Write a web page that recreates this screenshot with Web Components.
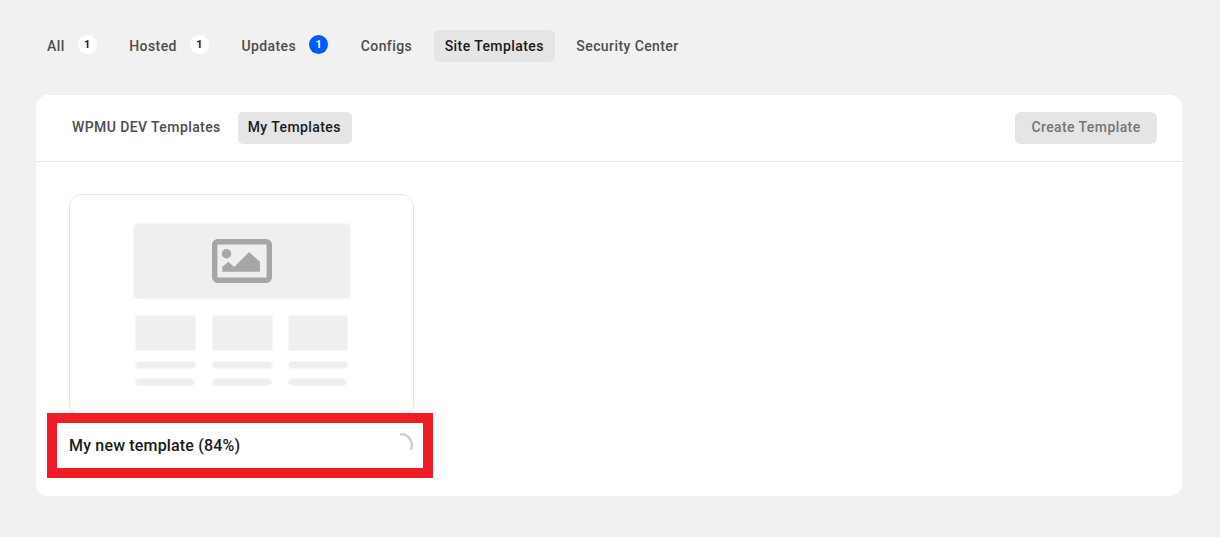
<!DOCTYPE html>
<html>
<head>
<meta charset="utf-8">
<style>
  html, body { margin: 0; height: 100%; }
  body { background: #f1f1f1; font-family: Roboto, "Liberation Sans", sans-serif; padding: 30px 38px 41px 36px; box-sizing: border-box; }
</style>
</head>
<body>
<site-tabs>
  <tab-item>All<count-badge>1</count-badge></tab-item>
  <tab-item>Hosted<count-badge>1</count-badge></tab-item>
  <tab-item>Updates<count-badge blue>1</count-badge></tab-item>
  <tab-item>Configs</tab-item>
  <tab-item active>Site Templates</tab-item>
  <tab-item>Security Center</tab-item>
</site-tabs>
<templates-panel>
  <tab-item slot="tabs">WPMU DEV Templates</tab-item>
  <tab-item slot="tabs" active>My Templates</tab-item>
  <template-card name="My new template (84%)" highlighted></template-card>
</templates-panel>

<script>
class CountBadge extends HTMLElement {
  constructor() {
    super();
    this.attachShadow({mode: 'open'}).innerHTML = `
      <style>
        :host { display: inline-flex; align-items: center; justify-content: center; width: 19px; height: 19px;
          margin: -3px 0 0 13px; border-radius: 50%; background: #fff; color: #1a1a1a; font-size: 11px; font-weight: 700; letter-spacing: 0; }
        :host([blue]) { background: #0059ff; color: #fff; }
      </style>
      <slot></slot>`;
  }
}
customElements.define('count-badge', CountBadge);

class TabItem extends HTMLElement {
  constructor() {
    super();
    this.attachShadow({mode: 'open'}).innerHTML = `
      <style>
        :host { display: inline-flex; align-items: center; height: 32px; box-sizing: border-box; padding: 0 11px; border-radius: 5px;
          font-size: 14px; font-weight: 500; letter-spacing: .41px; color: #4d4d4d; white-space: nowrap; }
        :host([slot="tabs"]) { padding-bottom: 2px; }
        :host([slot="tabs"][active]) { padding-left: 10px; }
        :host([active]) { background: #e5e5e5; color: #1a1a1a; }
      </style>
      <slot></slot>`;
  }
}
customElements.define('tab-item', TabItem);

class SiteTabs extends HTMLElement {
  constructor() {
    super();
    this.attachShadow({mode: 'open'}).innerHTML = `
      <style>
        :host { display: flex; gap: 10.6px; height: 32px; margin-bottom: 33px; }
      </style>
      <slot></slot>`;
  }
}
customElements.define('site-tabs', SiteTabs);

class TemplatesPanel extends HTMLElement {
  constructor() {
    super();
    this.attachShadow({mode: 'open'}).innerHTML = `
      <style>
        :host { display: block; width: 1146px; height: 401px; background: #fff; border-radius: 12px; box-sizing: border-box; }
        header { display: flex; align-items: center; height: 67px; box-sizing: border-box; padding: 0 25px 0 25px;
          border-bottom: 1px solid #e6e6e6; gap: 6px; }
        .create { margin-left: auto; display: flex; align-items: center; justify-content: center; width: 142px; height: 32px; box-sizing: border-box;
          padding-bottom: 2px; border-radius: 6px;
          background: #e5e5e5; color: #757575; font-size: 14px; font-weight: 500; letter-spacing: .41px; }
        main { padding: 32px 33px 0; }
      </style>
      <header>
        <slot name="tabs"></slot>
        <div class="create">Create Template</div>
      </header>
      <main><slot></slot></main>`;
  }
}
customElements.define('templates-panel', TemplatesPanel);

class TemplateCard extends HTMLElement {
  constructor() {
    super();
    const cell = `
      <div class="cell">
        <div class="thumb"></div>
        <div class="line"></div>
        <div class="line short"></div>
      </div>`;
    this.attachShadow({mode: 'open'}).innerHTML = `
      <style>
        :host { display: block; position: relative; width: 345px; }
        .preview { box-sizing: border-box; height: 222px; border: 1px solid #e6e6e6; border-radius: 12px; padding: 28px 62px 0 63px; }
        .hero { box-sizing: border-box; height: 76px; border-radius: 5px; background: #eeefee; border: 1px solid #f6f6f6; display: flex; align-items: center; justify-content: center; }
        .grid { display: grid; grid-template-columns: 61px 61px 60px; column-gap: 15.5px; margin: 16px 0 0 2px; }
        .thumb { box-sizing: border-box; height: 36px; background: #eeefee; border: 1px solid #f6f6f6; }
        .line { box-sizing: border-box; height: 8px; margin-top: 10px; background: #eeefee; border: 1px solid #f6f6f6; border-radius: 4px; }
        .line.short { margin-top: 9px; margin-right: 1px; }
        .name { display: flex; align-items: center; justify-content: space-between; height: 30px; margin-top: 14px; margin-right: 1px;
          font-size: 16px; font-weight: 500; letter-spacing: .17px; color: #1a1a1a; }
        svg.spin { display: block; width: 18px; height: 24px; }
        .mark { position: absolute; left: -22px; top: 219px; width: 386px; height: 65px; box-sizing: border-box; border: 10px solid #ee1c25; pointer-events: none; }
      </style>
      <div class="preview">
        <div class="hero">
          <svg width="60" height="44" viewBox="0 0 60 44">
            <rect x="2.7" y="2.7" width="54.6" height="38.6" rx="3" fill="none" stroke="#a6a6a6" stroke-width="5.4"/>
            <circle cx="14.5" cy="14.7" r="4.7" fill="#a6a6a6"/>
            <path d="M10.3 32.7 V27.7 L16.3 22.7 L22.3 28 L37 13 L48 22.7 V32.7 Z" fill="#a6a6a6"/>
          </svg>
        </div>
        <div class="grid">${cell}${cell}${cell}</div>
      </div>
      <div class="name">
        <span>${this.getAttribute('name')}</span>
        <svg class="spin" viewBox="0 0 18 24"><path d="M5 1.2 A 11 11 0 0 1 15.7 17" fill="none" stroke="#d0d0d0" stroke-width="2.6"/></svg>
      </div>
      <div class="mark"></div>`;
  }
}
customElements.define('template-card', TemplateCard);
</script>
</body>
</html>
